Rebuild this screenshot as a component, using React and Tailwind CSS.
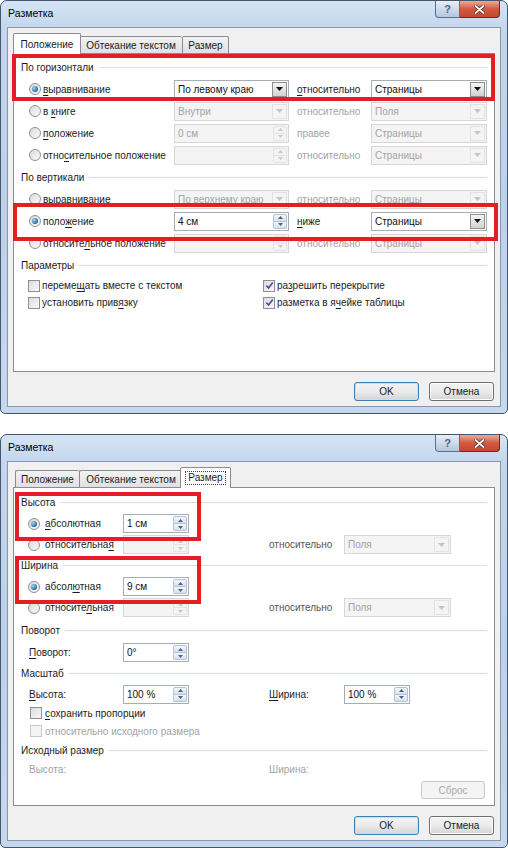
import React from 'react';

function U({ t, u }) {
  if (u == null) return t;
  return (
    <>
      {t.slice(0, u)}
      <span className="underline underline-offset-[2px] decoration-1">{t[u]}</span>
      {t.slice(u + 1)}
    </>
  );
}

function Tri({ up, color = '#111', w = 7, h = 4 }) {
  return (
    <svg width={w} height={h} viewBox="0 0 7 4" className={up ? 'rotate-180' : ''}>
      <path d="M0 0H7L3.5 4Z" fill={color} />
    </svg>
  );
}

function Radio({ on, off }) {
  return (
    <span
      className={`w-[12px] h-[12px] shrink-0 rounded-full border flex items-center justify-center ${
        off ? 'border-[#c8cacc] bg-[#f4f4f4]' : 'border-[#8d9297] bg-gradient-to-br from-[#d9d9d9] to-[#fbfbfb]'
      }`}
    >
      {on && <span className="w-[6px] h-[6px] rounded-full bg-[radial-gradient(circle_at_35%_35%,#a6d6f5,#1e5f94_75%)]" />}
    </span>
  );
}

function Check({ on, off }) {
  return (
    <span
      className={`w-[12px] h-[12px] shrink-0 border flex items-center justify-center ${
        off ? 'border-[#c9c9c9] bg-[#f4f4f4]' : 'border-[#8f8f8f] bg-gradient-to-br from-[#dcdcdc] to-[#f9f9f9]'
      }`}
    >
      {on && (
        <svg width="9" height="9" viewBox="0 0 10 10">
          <path d="M1.5 5.2L4 7.8L8.6 1.6" stroke="#3f5594" strokeWidth="1.8" fill="none" />
        </svg>
      )}
    </span>
  );
}

function Combo({ v, w, off }) {
  return (
    <div
      className={`${w} h-[19px] shrink-0 flex border ${
        off ? 'border-[#d6d6d6] bg-[#f4f4f4] text-[#a3a3a3]' : 'border-[#a5adb8] bg-white text-[#111]'
      }`}
    >
      <span className="flex-1 pl-[3px] leading-[17px] whitespace-nowrap overflow-hidden">{v}</span>
      <span
        className={`w-[15px] m-[1px] flex items-center justify-center border ${
          off ? 'border-[#e3e3e3] bg-[#f4f4f4]' : 'border-[#8e8e8e] bg-gradient-to-b from-[#f5f5f5] to-[#d2d2d2]'
        }`}
      >
        <Tri color={off ? '#c4c4c4' : '#111'} />
      </span>
    </div>
  );
}

function Spin({ v, w, off }) {
  const half = off
    ? 'border-[#e3e3e3] bg-[#f4f4f4]'
    : 'border-[#b4c2d4] bg-gradient-to-b from-[#f3f7fb] to-[#d5e1ef]';
  const c = off ? '#c8c8c8' : '#4d6185';
  return (
    <div
      className={`${w} h-[19px] shrink-0 flex border ${
        off ? 'border-[#d6d6d6] bg-[#f4f4f4] text-[#a3a3a3]' : 'border-[#a5adb8] bg-white text-[#111]'
      }`}
    >
      <span className="flex-1 pl-[3px] leading-[17px] whitespace-nowrap">{v}</span>
      <div className="w-[14px] flex flex-col my-[1px] mr-[1px]">
        <span className={`flex-1 border rounded-t-[2px] flex items-center justify-center ${half}`}>
          <Tri up color={c} w={5} h={3} />
        </span>
        <span className={`flex-1 border border-t-0 rounded-b-[2px] flex items-center justify-center ${half}`}>
          <Tri color={c} w={5} h={3} />
        </span>
      </div>
    </div>
  );
}

function Group({ t, h = 'h-[22px]' }) {
  return (
    <div className={`flex items-center ${h} pl-[7px] pr-[7px]`}>
      <span className="whitespace-nowrap">{t}</span>
      <span className="flex-1 h-px bg-[#d5dfe5] ml-[5px]" />
    </div>
  );
}

function PRow({ on, label, u, mid, rel, relU, relOff, right }) {
  return (
    <div className="flex items-center h-[22px]">
      <div className="w-[160px] flex items-center pl-[15px]">
        <Radio on={on} />
        <span className="ml-[2px] whitespace-nowrap">
          <U t={label} u={u} />
        </span>
      </div>
      {mid}
      <span className={`ml-[8px] w-[74px] ${relOff ? 'text-[#a3a3a3]' : ''}`}>
        <U t={rel} u={relU} />
      </span>
      {right}
    </div>
  );
}

function CRow({ a, au, b, bu, bOn }) {
  return (
    <div className="flex items-center h-[17px]">
      <div className="w-[249px] flex items-center pl-[14px]">
        <Check />
        <span className="ml-[2px]">
          <U t={a} u={au} />
        </span>
      </div>
      <div className="flex items-center">
        <Check on={bOn} />
        <span className="ml-[2px]">
          <U t={b} u={bu} />
        </span>
      </div>
    </div>
  );
}

function PositionPanel() {
  return (
    <div className="flex flex-col pt-[2px]">
      <Group t="По горизонтали" />
      <PRow on label="выравнивание" u={0} mid={<Combo w="w-[115px]" v="По левому краю" />} rel="относительно" relU={0} right={<Combo w="w-[116px]" v="Страницы" />} />
      <PRow label="в книге" u={2} mid={<Combo off w="w-[115px]" v="Внутри" />} rel="относительно" relOff right={<Combo off w="w-[116px]" v="Поля" />} />
      <PRow label="положение" u={0} mid={<Spin off w="w-[115px]" v="0 см" />} rel="правее" relOff right={<Combo off w="w-[116px]" v="Страницы" />} />
      <PRow label="относительное положение" u={4} mid={<Spin off w="w-[115px]" v="" />} rel="относительно" relOff right={<Combo off w="w-[116px]" v="Страницы" />} />
      <Group t="По вертикали" />
      <PRow label="выравнивание" mid={<Combo off w="w-[115px]" v="По верхнему краю" />} rel="относительно" relOff right={<Combo off w="w-[116px]" v="Страницы" />} />
      <PRow on label="положение" u={4} mid={<Spin w="w-[115px]" v="4 см" />} rel="ниже" relU={0} right={<Combo w="w-[116px]" v="Страницы" />} />
      <PRow label="относительное положение" u={8} mid={<Spin off w="w-[115px]" v="" />} rel="относительно" relOff right={<Combo off w="w-[116px]" v="Страницы" />} />
      <Group t="Параметры" h="h-[23px]" />
      <CRow a="перемещать вместе с текстом" au={6} b="разрешить перекрытие" bu={2} bOn />
      <CRow a="установить привязку" au={15} b="разметка в ячейке таблицы" bu={12} bOn />
    </div>
  );
}

function SRow({ on, label, u, spin, spinOff, rel }) {
  return (
    <div className="flex items-center h-[21px]">
      <div className="w-[109px] flex items-center pl-[14px]">
        <Radio on={on} />
        <span className="ml-[5px]">
          <U t={label} u={u} />
        </span>
      </div>
      <Spin w="w-[66px]" v={spin} off={spinOff} />
      {rel && (
        <>
          <span className="w-[155px] pl-[80px] text-[#555]">относительно</span>
          <Combo off w="w-[107px]" v="Поля" />
        </>
      )}
    </div>
  );
}

function SizePanel() {
  return (
    <div className="flex flex-col pt-[3px]">
      <Group t="Высота" />
      <SRow on label="абсолютная" u={0} spin="1 см" />
      <SRow label="относительная" u={12} spin="" spinOff rel />
      <Group t="Ширина" h="h-[21px]" />
      <SRow on label="абсолютная" u={5} spin="9 см" />
      <SRow label="относительная" u={8} spin="" spinOff rel />
      <Group t="Поворот" h="h-[24px]" />
      <div className="flex items-center h-[21px]">
        <span className="w-[109px] pl-[15px]">
          <U t="Поворот:" u={0} />
        </span>
        <Spin w="w-[66px]" v="0°" />
      </div>
      <Group t="Масштаб" h="h-[21px]" />
      <div className="flex items-center h-[20px]">
        <span className="w-[109px] pl-[15px]">
          <U t="Высота:" u={0} />
        </span>
        <Spin w="w-[66px]" v="100 %" />
        <span className="w-[155px] pl-[80px]">
          <U t="Ширина:" u={0} />
        </span>
        <Spin w="w-[66px]" v="100 %" />
      </div>
      <div className="flex items-center h-[18px] pl-[16px]">
        <Check />
        <span className="ml-[3px]">
          <U t="сохранить пропорции" u={0} />
        </span>
      </div>
      <div className="flex items-center h-[18px] pl-[16px]">
        <Check off />
        <span className="ml-[3px] text-[#a3a3a3]">относительно исходного размера</span>
      </div>
      <Group t="Исходный размер" h="h-[20px]" />
      <div className="flex items-center h-[18px] text-[#a3a3a3]">
        <span className="w-[255px] pl-[15px]">Высота:</span>
        <span>Ширина:</span>
      </div>
      <div className="flex justify-end pr-[9px] mt-[3px]">
        <div className="w-[64px] h-[18px] rounded-[3px] border border-[#c9c9c9] bg-[#f4f4f4] text-[#a8a8a8] flex items-center justify-center">
          Сброс
        </div>
      </div>
    </div>
  );
}

function Tabs({ active, focus }) {
  const tabs = [
    ['Положение', 'w-[64px]', 'w-[68px]'],
    ['Обтекание текстом', 'w-[103px]', 'w-[107px]'],
    ['Размер', 'w-[47px]', 'w-[51px]'],
  ];
  return (
    <div className="flex items-start h-[21px] pl-[2px] -mb-px relative z-10">
      {tabs.map(([t, w, wa], i) =>
        i === active ? (
          <div
            key={i}
            className={`${wa} -mx-[2px] h-[21px] bg-white border border-b-0 border-[#898c95] rounded-t-[2px] flex justify-center pt-[3px] relative z-10`}
          >
            <span className={focus ? 'border border-dotted border-[#444] px-[2px] h-[14px] leading-[12px]' : ''}>{t}</span>
          </div>
        ) : (
          <div
            key={i}
            className={`${w} mt-[3px] h-[17px] border-t border-l ${
              i === 2 ? 'border-r' : ''
            } border-[#898c95] bg-gradient-to-b from-[#f3f3f3] to-[#e0e0e0] rounded-t-[2px] flex items-center justify-center`}
          >
            {t}
          </div>
        )
      )}
    </div>
  );
}

function Btn({ def, children }) {
  return (
    <div
      className={`w-[65px] h-[19px] rounded-[3px] border flex items-center justify-center bg-gradient-to-b from-[#f3f3f3] via-[#ebebeb] to-[#d4d4d4] ${
        def ? 'border-[#3c7fb1] shadow-[inset_0_0_0_1px_#bfe3f8]' : 'border-[#707070] shadow-[inset_0_0_0_1px_#fcfcfc]'
      }`}
    >
      {children}
    </div>
  );
}

function Dialog({ active, focus, children, overlay }) {
  return (
    <div className="relative shrink-0 h-[414px] rounded-t-[7px] rounded-b-[5px] border border-[#44566c] bg-[linear-gradient(180deg,#d6e4f5_0%,#c3d6ed_7%,#bcd1ea_50%,#c5d8ee_100%)] px-[6px] pb-[6px]">
      <div className="h-[26px] flex items-center pl-[1px] text-[10.5px] text-black">Разметка</div>
      <div className="border border-[#8798ae] bg-[#f0f0f0] px-[5px] pt-[5px] pb-[5px]">
        <Tabs active={active} focus={focus} />
        <div className="h-[319px] border border-[#898c95] bg-white">{children}</div>
        <div className="mt-[10px] flex justify-end gap-[10px] pr-[1px]">
          <Btn def>OK</Btn>
          <Btn>Отмена</Btn>
        </div>
      </div>
      <div className="absolute top-0 right-[7px] flex">
        <div className="w-[25px] h-[17px] rounded-bl-[4px] border border-t-0 border-[#5d6f88] bg-gradient-to-b from-[#e6eef7] to-[#b4c7df] flex items-center justify-center text-[11px] font-bold text-[#50627a]">
          ?
        </div>
        <div className="w-[40px] h-[17px] rounded-br-[4px] border border-t-0 border-l-0 border-[#6a2d22] bg-gradient-to-b from-[#eaa999] via-[#d0593f] to-[#c8462c] flex items-center justify-center">
          <svg width="11" height="9" viewBox="0 0 11 9">
            <path d="M1.5 1L9.5 8M9.5 1L1.5 8" stroke="#4a1a12" strokeWidth="3.2" strokeLinecap="round" />
            <path d="M1.5 1L9.5 8M9.5 1L1.5 8" stroke="#fff" strokeWidth="1.9" strokeLinecap="round" />
          </svg>
        </div>
      </div>
      {overlay}
    </div>
  );
}

export default function App() {
  return (
    <div className="w-[508px] h-[848px] bg-white flex flex-col gap-[20px] font-['Liberation_Sans',Arial,sans-serif] text-[10px] text-[#1b1b1b] overflow-hidden">
      <Dialog
        active={0}
        overlay={
          <>
            <div className="absolute left-[11px] top-[53px] w-[483px] h-[47px] border-[4px] border-[#e31e24] z-20" />
            <div className="absolute left-[12px] top-[202px] w-[485px] h-[38px] border-[4px] border-[#e31e24] z-20" />
          </>
        }
      >
        <PositionPanel />
      </Dialog>
      <Dialog
        active={2}
        focus
        overlay={
          <>
            <div className="absolute left-[14px] top-[57px] w-[186px] h-[49px] border-[4px] border-[#e31e24] z-20" />
            <div className="absolute left-[14px] top-[121px] w-[186px] h-[48px] border-[4px] border-[#e31e24] z-20" />
          </>
        }
      >
        <SizePanel />
      </Dialog>
    </div>
  );
}
